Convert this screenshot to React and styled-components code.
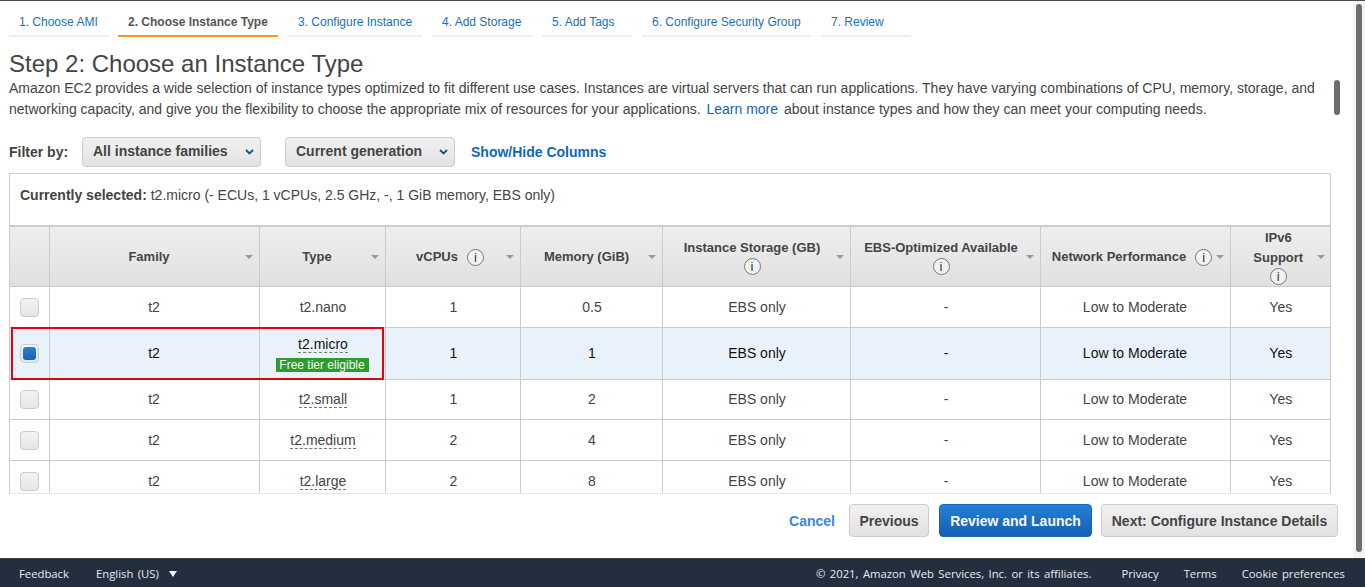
import React from "react";
import styled, { createGlobalStyle } from "styled-components";

const GlobalStyle = createGlobalStyle`
  html, body {
    margin: 0;
    padding: 0;
    height: 100%;
    overflow: hidden;
    background: #fff;
    font-family: "Liberation Sans", Arial, sans-serif;
    color: #444;
  }
  * { box-sizing: border-box; }
`;

const Page = styled.div`
  width: 1365px;
  height: 587px;
  display: flex;
  flex-direction: column;
  border-top: 1px solid #444c56;
`;

const Body = styled.div`
  flex: 1;
  min-height: 0;
  display: flex;
`;

const Main = styled.main`
  position: relative;
  flex: 1;
  min-width: 0;
  display: flex;
  flex-direction: column;
`;

const Track = styled.div`
  width: 12px;
  background: #f4f4f4;
  padding: 3px 3px 6px;
`;

const Thumb = styled.div`
  height: 100%;
  border-radius: 3px;
  background: #6e6e6e;
`;

const InnerThumb = styled.div`
  position: absolute;
  left: 1334px;
  top: 79px;
  width: 6px;
  height: 35px;
  border-radius: 3px;
  background: #6e6e6e;
`;

const Tabs = styled.nav`
  display: flex;
  gap: 10px;
  padding: 0 0 0 9px;
  height: 36px;
`;

const Tab = styled.a`
  display: block;
  width: ${({ $w }) => $w}px;
  height: 36px;
  padding: 14px 0 0 10px;
  font-size: 12px;
  line-height: 15px;
  font-weight: ${({ $active }) => ($active ? 700 : 400)};
  color: ${({ $active }) => ($active ? "#555" : "#1a6fc0")};
  border-bottom: 2px solid ${({ $active }) => ($active ? "#f7981d" : "#eee")};
`;

const Title = styled.h1`
  margin: 13px 0 0 9px;
  font-size: 24px;
  line-height: 28px;
  font-weight: 400;
  color: #444;
`;

const Intro = styled.div`
  margin: 0 0 0 9px;
  font-size: 14px;
  line-height: 21px;
  color: #444;
  white-space: nowrap;
`;

const Link = styled.a`
  color: #1166bb;
  margin: 0 2px;
`;

const FilterBar = styled.div`
  display: flex;
  align-items: center;
  margin: 17px 0 0 9px;
  height: 30px;
`;

const FilterLabel = styled.span`
  width: 73px;
  font-size: 14px;
  font-weight: 700;
  color: #444;
`;

const Select = styled.div`
  width: ${({ $w }) => $w}px;
  height: 30px;
  margin-right: ${({ $mr }) => $mr}px;
  display: flex;
  align-items: center;
  justify-content: space-between;
  padding: 0 4px 3px 10px;
  border: 1px solid #ccc;
  border-radius: 4px;
  background: linear-gradient(#f1f1f1, #e2e2e2);
  font-size: 14px;
  font-weight: 700;
  color: #444;
`;

const Chevron = styled.svg`
  width: 9px;
  height: 6px;
  margin-right: 2px;
  margin-top: 3px;
`;

const ColumnsLink = styled.a`
  font-size: 14px;
  font-weight: 700;
  color: #1166bb;
`;

const Panel = styled.section`
  position: relative;
  margin: 6px 0 0 9px;
  width: 1322px;
  height: 321px;
  overflow: hidden;
  border-left: 1px solid #ccc;
  border-right: 1px solid #ccc;
  border-bottom: 1px solid #e6e6e6;
`;

const Selected = styled.div`
  height: 52px;
  padding: 13px 10px 0;
  border-top: 1px solid #ccc;
  font-size: 14px;
  line-height: 17px;
  color: #444;
  b { font-weight: 700; }
`;

const Table = styled.table`
  width: 1320px;
  table-layout: fixed;
  border-collapse: collapse;
`;

const Head = styled.th`
  height: 60px;
  padding: 0;
  position: relative;
  border-top: 2px solid #ccc;
  border-bottom: 1px solid #ccc;
  border-right: 1px solid #ccc;
  &:last-child { border-right: 0; }
  background: linear-gradient(#eeeeee, #e0e0e0);
  font-size: 13px;
  line-height: 20px;
  font-weight: 700;
  color: #444;
  text-align: center;
`;

const HeadInner = styled.div`
  display: flex;
  align-items: center;
  justify-content: center;
  flex-wrap: wrap;
  column-gap: 9px;
  padding-top: ${({ $pt }) => $pt}px;
  padding-right: ${({ $pr }) => $pr}px;
`;

const Break = styled.span`
  flex-basis: 100%;
  height: 0;
`;

const SortCaret = styled.span`
  position: absolute;
  right: 6px;
  top: 28px;
  width: 0;
  height: 0;
  border-left: 4px solid transparent;
  border-right: 4px solid transparent;
  border-top: 4px solid #999;
`;

const InfoIcon = styled.span`
  display: inline-flex;
  align-items: center;
  justify-content: center;
  width: 17px;
  height: 17px;
  border-radius: 50%;
  border: 1px solid #777;
  font-size: 13px;
  line-height: 1;
  font-weight: 400;
  color: #333;
  background: #f2f2f2;
`;

const Row = styled.tr`
  background: ${({ $selected }) => ($selected ? "#e9f1fb" : "#fff")};
  color: ${({ $selected }) => ($selected ? "#111" : "#444")};
`;

const Cell = styled.td`
  height: ${({ $h }) => $h}px;
  padding: 1px 0 0;
  border-bottom: 1px solid #ccc;
  border-right: 1px solid #ccc;
  &:last-child { border-right: 0; }
  &:nth-child(n + 3) { padding-left: 2px; }
  &:nth-child(n + 8) { padding-left: 0; }
  font-size: 14px;
  line-height: 17px;
  text-align: center;
`;

const Radio = styled.span`
  display: block;
  width: 19px;
  height: 19px;
  margin: 0 auto;
  padding: 2px;
  border: 1px solid #ccc;
  border-radius: 4px;
  background: linear-gradient(#f3f3f3, #e6e6e6);
`;

const RadioDot = styled.span`
  display: block;
  width: 13px;
  height: 13px;
  border-radius: 3px;
  background: linear-gradient(#2a7fd6, #1560b4);
`;

const TypeName = styled.span`
  display: inline-block;
  line-height: 16px;
  border-bottom: ${({ $plain }) => ($plain ? "0" : "1px dashed #777")};
`;

const FreeTier = styled.div`
  width: 93px;
  height: 14px;
  margin: 5px 0 0 14px;
  background: #2e9a30;
  color: #f4fbf4;
  font-size: 12px;
  line-height: 14px;
`;

const Highlight = styled.div`
  position: absolute;
  left: 1px;
  top: 154px;
  width: 373px;
  height: 53px;
  border: 2px solid #e8000b;
  pointer-events: none;
`;

const Actions = styled.div`
  display: flex;
  justify-content: flex-end;
  align-items: center;
  gap: 10px;
  margin-top: 10px;
  padding-right: 15px;
`;

const CancelLink = styled.a`
  margin-right: 4px;
  font-size: 14px;
  font-weight: 700;
  color: #3a87dd;
`;

const Button = styled.button`
  height: 33px;
  width: ${({ $w }) => $w}px;
  margin-left: ${({ $ml }) => $ml ?? 0}px;
  padding: 0;
  border-radius: 4px;
  font-family: inherit;
  font-size: 14px;
  font-weight: 700;
  border: 1px solid ${({ $primary }) => ($primary ? "#1b66b3" : "#ccc")};
  color: ${({ $primary }) => ($primary ? "#f4f8fc" : "#444")};
  background: ${({ $primary }) =>
    $primary ? "linear-gradient(#247fd4, #1560b4)" : "linear-gradient(#f1f1f1, #e2e2e2)"};
`;

const Footer = styled.footer`
  height: 29px;
  flex-shrink: 0;
  display: flex;
  align-items: center;
  padding: 0 20px 0 19px;
  background: #232f3e;
  border-top: 1px solid #39444f;
  color: #e8ebee;
  font-family: "Open Sans", "Noto Sans", sans-serif;
  font-size: 11.3px;
  word-spacing: 1.5px;
`;

const FooterItem = styled.span`
  margin-left: ${({ $ml }) => $ml ?? 0}px;
  white-space: nowrap;
`;

const LangCaret = styled.span`
  display: inline-block;
  width: 0;
  height: 0;
  margin-left: 10px;
  vertical-align: 1px;
  border-left: 4px solid transparent;
  border-right: 4px solid transparent;
  border-top: 6px solid #fff;
`;

const Spacer = styled.span`
  flex: 1;
`;

const steps = [
  ["1. Choose AMI", 99],
  ["2. Choose Instance Type", 160],
  ["3. Configure Instance", 134],
  ["4. Add Storage", 100],
  ["5. Add Tags", 90],
  ["6. Configure Security Group", 169],
  ["7. Review", 90],
];

const columns = [39, 210, 126, 135, 142, 188, 190, 190, 101];

const rows = [
  { type: "t2.nano", cpu: 1, mem: "0.5", plain: true, h: 41 },
  { type: "t2.micro", cpu: 1, mem: "1", selected: true, h: 52 },
  { type: "t2.small", cpu: 1, mem: "2", h: 40 },
  { type: "t2.medium", cpu: 2, mem: "4", h: 41 },
  { type: "t2.large", cpu: 2, mem: "8", h: 41 },
];

const Info = () => <InfoIcon>i</InfoIcon>;

const HeadCell = ({ children, pr = 10, pt = 0 }) => (
  <Head>
    <HeadInner $pr={pr} $pt={pt}>
      {children}
    </HeadInner>
    <SortCaret />
  </Head>
);

const Dropdown = ({ label, width, mr }) => (
  <Select $w={width} $mr={mr}>
    {label}
    <Chevron viewBox="0 0 9 6">
      <path d="M1 1l3.5 3.5L8 1" fill="none" stroke="#13508f" strokeWidth="1.8" />
    </Chevron>
  </Select>
);

export default function App() {
  return (
    <>
      <GlobalStyle />
      <Page>
        <Body>
          <Main>
            <Tabs>
              {steps.map(([label, w], i) => (
                <Tab key={label} $w={w} $active={i === 1}>
                  {label}
                </Tab>
              ))}
            </Tabs>
            <Title>Step 2: Choose an Instance Type</Title>
            <Intro>
              Amazon EC2 provides a wide selection of instance types optimized to fit different use
              cases. Instances are virtual servers that can run applications. They have varying
              combinations of CPU, memory, storage, and
            </Intro>
            <Intro>
              networking capacity, and give you the flexibility to choose the appropriate mix of
              resources for your applications. <Link>Learn more</Link> about instance types and how
              they can meet your computing needs.
            </Intro>
            <FilterBar>
              <FilterLabel>Filter by:</FilterLabel>
              <Dropdown label="All instance families" width={179} mr={24} />
              <Dropdown label="Current generation" width={170} mr={16} />
              <ColumnsLink>Show/Hide Columns</ColumnsLink>
            </FilterBar>
            <Panel>
              <Selected>
                <b>Currently selected:</b> t2.micro (- ECUs, 1 vCPUs, 2.5 GHz, -, 1 GiB memory, EBS
                only)
              </Selected>
              <Table>
                <colgroup>
                  {columns.map((w, i) => (
                    <col key={i} style={{ width: w }} />
                  ))}
                </colgroup>
                <thead>
                  <tr>
                    <Head />
                    <HeadCell pt={2}>Family</HeadCell>
                    <HeadCell pt={2}>Type</HeadCell>
                    <HeadCell pr={5} pt={2}>
                      vCPUs <Info />
                    </HeadCell>
                    <HeadCell pr={9} pt={2}>
                      Memory (GiB)
                    </HeadCell>
                    <HeadCell pr={8}>
                      Instance Storage (GB)
                      <Break />
                      <Info />
                    </HeadCell>
                    <HeadCell pr={8}>
                      EBS-Optimized Available
                      <Break />
                      <Info />
                    </HeadCell>
                    <HeadCell pr={6} pt={2}>
                      Network Performance <Info />
                    </HeadCell>
                    <HeadCell pr={5}>
                      IPv6
                      <Break />
                      Support
                      <Break />
                      <Info />
                    </HeadCell>
                  </tr>
                </thead>
                <tbody>
                  {rows.map((r) => (
                    <Row key={r.type} $selected={r.selected}>
                      <Cell $h={r.h}>
                        <Radio>{r.selected && <RadioDot />}</Radio>
                      </Cell>
                      <Cell>t2</Cell>
                      <Cell>
                        <TypeName $plain={r.plain}>{r.type}</TypeName>
                        {r.selected && <FreeTier>Free tier eligible</FreeTier>}
                      </Cell>
                      <Cell>{r.cpu}</Cell>
                      <Cell>{r.mem}</Cell>
                      <Cell>EBS only</Cell>
                      <Cell>-</Cell>
                      <Cell>Low to Moderate</Cell>
                      <Cell>Yes</Cell>
                    </Row>
                  ))}
                </tbody>
              </Table>
              <Highlight />
            </Panel>
            <Actions>
              <CancelLink>Cancel</CancelLink>
              <Button $w={80}>Previous</Button>
              <Button $w={153} $primary>
                Review and Launch
              </Button>
              <Button $w={237} $ml={-1}>
                Next: Configure Instance Details
              </Button>
            </Actions>
            <InnerThumb />
          </Main>
          <Track>
            <Thumb />
          </Track>
        </Body>
        <Footer>
          <FooterItem>Feedback</FooterItem>
          <FooterItem $ml={27}>
            English (US)
            <LangCaret />
          </FooterItem>
          <Spacer />
          <FooterItem>© 2021, Amazon Web Services, Inc. or its affiliates.</FooterItem>
          <FooterItem $ml={30}>Privacy</FooterItem>
          <FooterItem $ml={25}>Terms</FooterItem>
          <FooterItem $ml={25}>Cookie preferences</FooterItem>
        </Footer>
      </Page>
    </>
  );
}
